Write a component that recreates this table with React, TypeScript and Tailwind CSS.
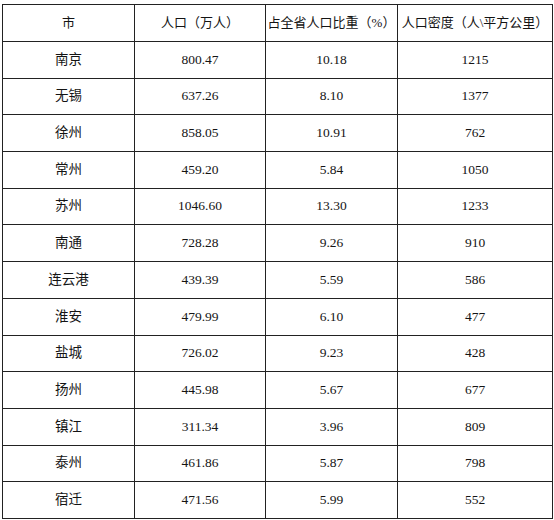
const rows = [
  ['南京', '800.47', '10.18', '1215'],
  ['无锡', '637.26', '8.10', '1377'],
  ['徐州', '858.05', '10.91', '762'],
  ['常州', '459.20', '5.84', '1050'],
  ['苏州', '1046.60', '13.30', '1233'],
  ['南通', '728.28', '9.26', '910'],
  ['连云港', '439.39', '5.59', '586'],
  ['淮安', '479.99', '6.10', '477'],
  ['盐城', '726.02', '9.23', '428'],
  ['扬州', '445.98', '5.67', '677'],
  ['镇江', '311.34', '3.96', '809'],
  ['泰州', '461.86', '5.87', '798'],
  ['宿迁', '471.56', '5.99', '552'],
];

const headers = ['市', '人口（万人）', '占全省人口比重（%）', '人口密度（人\\平方公里）'];

export default function App() {
  return (
    <div className="w-[554px] h-[520px] bg-white pl-[2px] pt-[4px] overflow-hidden">
      <table className="border-collapse table-fixed w-[550px] text-[#141414] font-['Liberation_Serif','Noto_Sans_CJK_SC',serif]">
        <colgroup>
          <col className="w-[132px]" />
          <col className="w-[131px]" />
          <col className="w-[132px]" />
          <col className="w-[155px]" />
        </colgroup>
        <thead>
          <tr className="h-[37px]">
            {headers.map((h) => (
              <th key={h} className="border border-[#222] font-normal text-[13px] text-center whitespace-nowrap px-0">
                {h}
              </th>
            ))}
          </tr>
        </thead>
        <tbody>
          {rows.map((r) => (
            <tr key={r[0]} className="h-[36.7px]">
              {r.map((c, i) => (
                <td key={i} className="border border-[#222] text-[13.5px] text-center p-0">
                  {c}
                </td>
              ))}
            </tr>
          ))}
        </tbody>
      </table>
    </div>
  );
}
